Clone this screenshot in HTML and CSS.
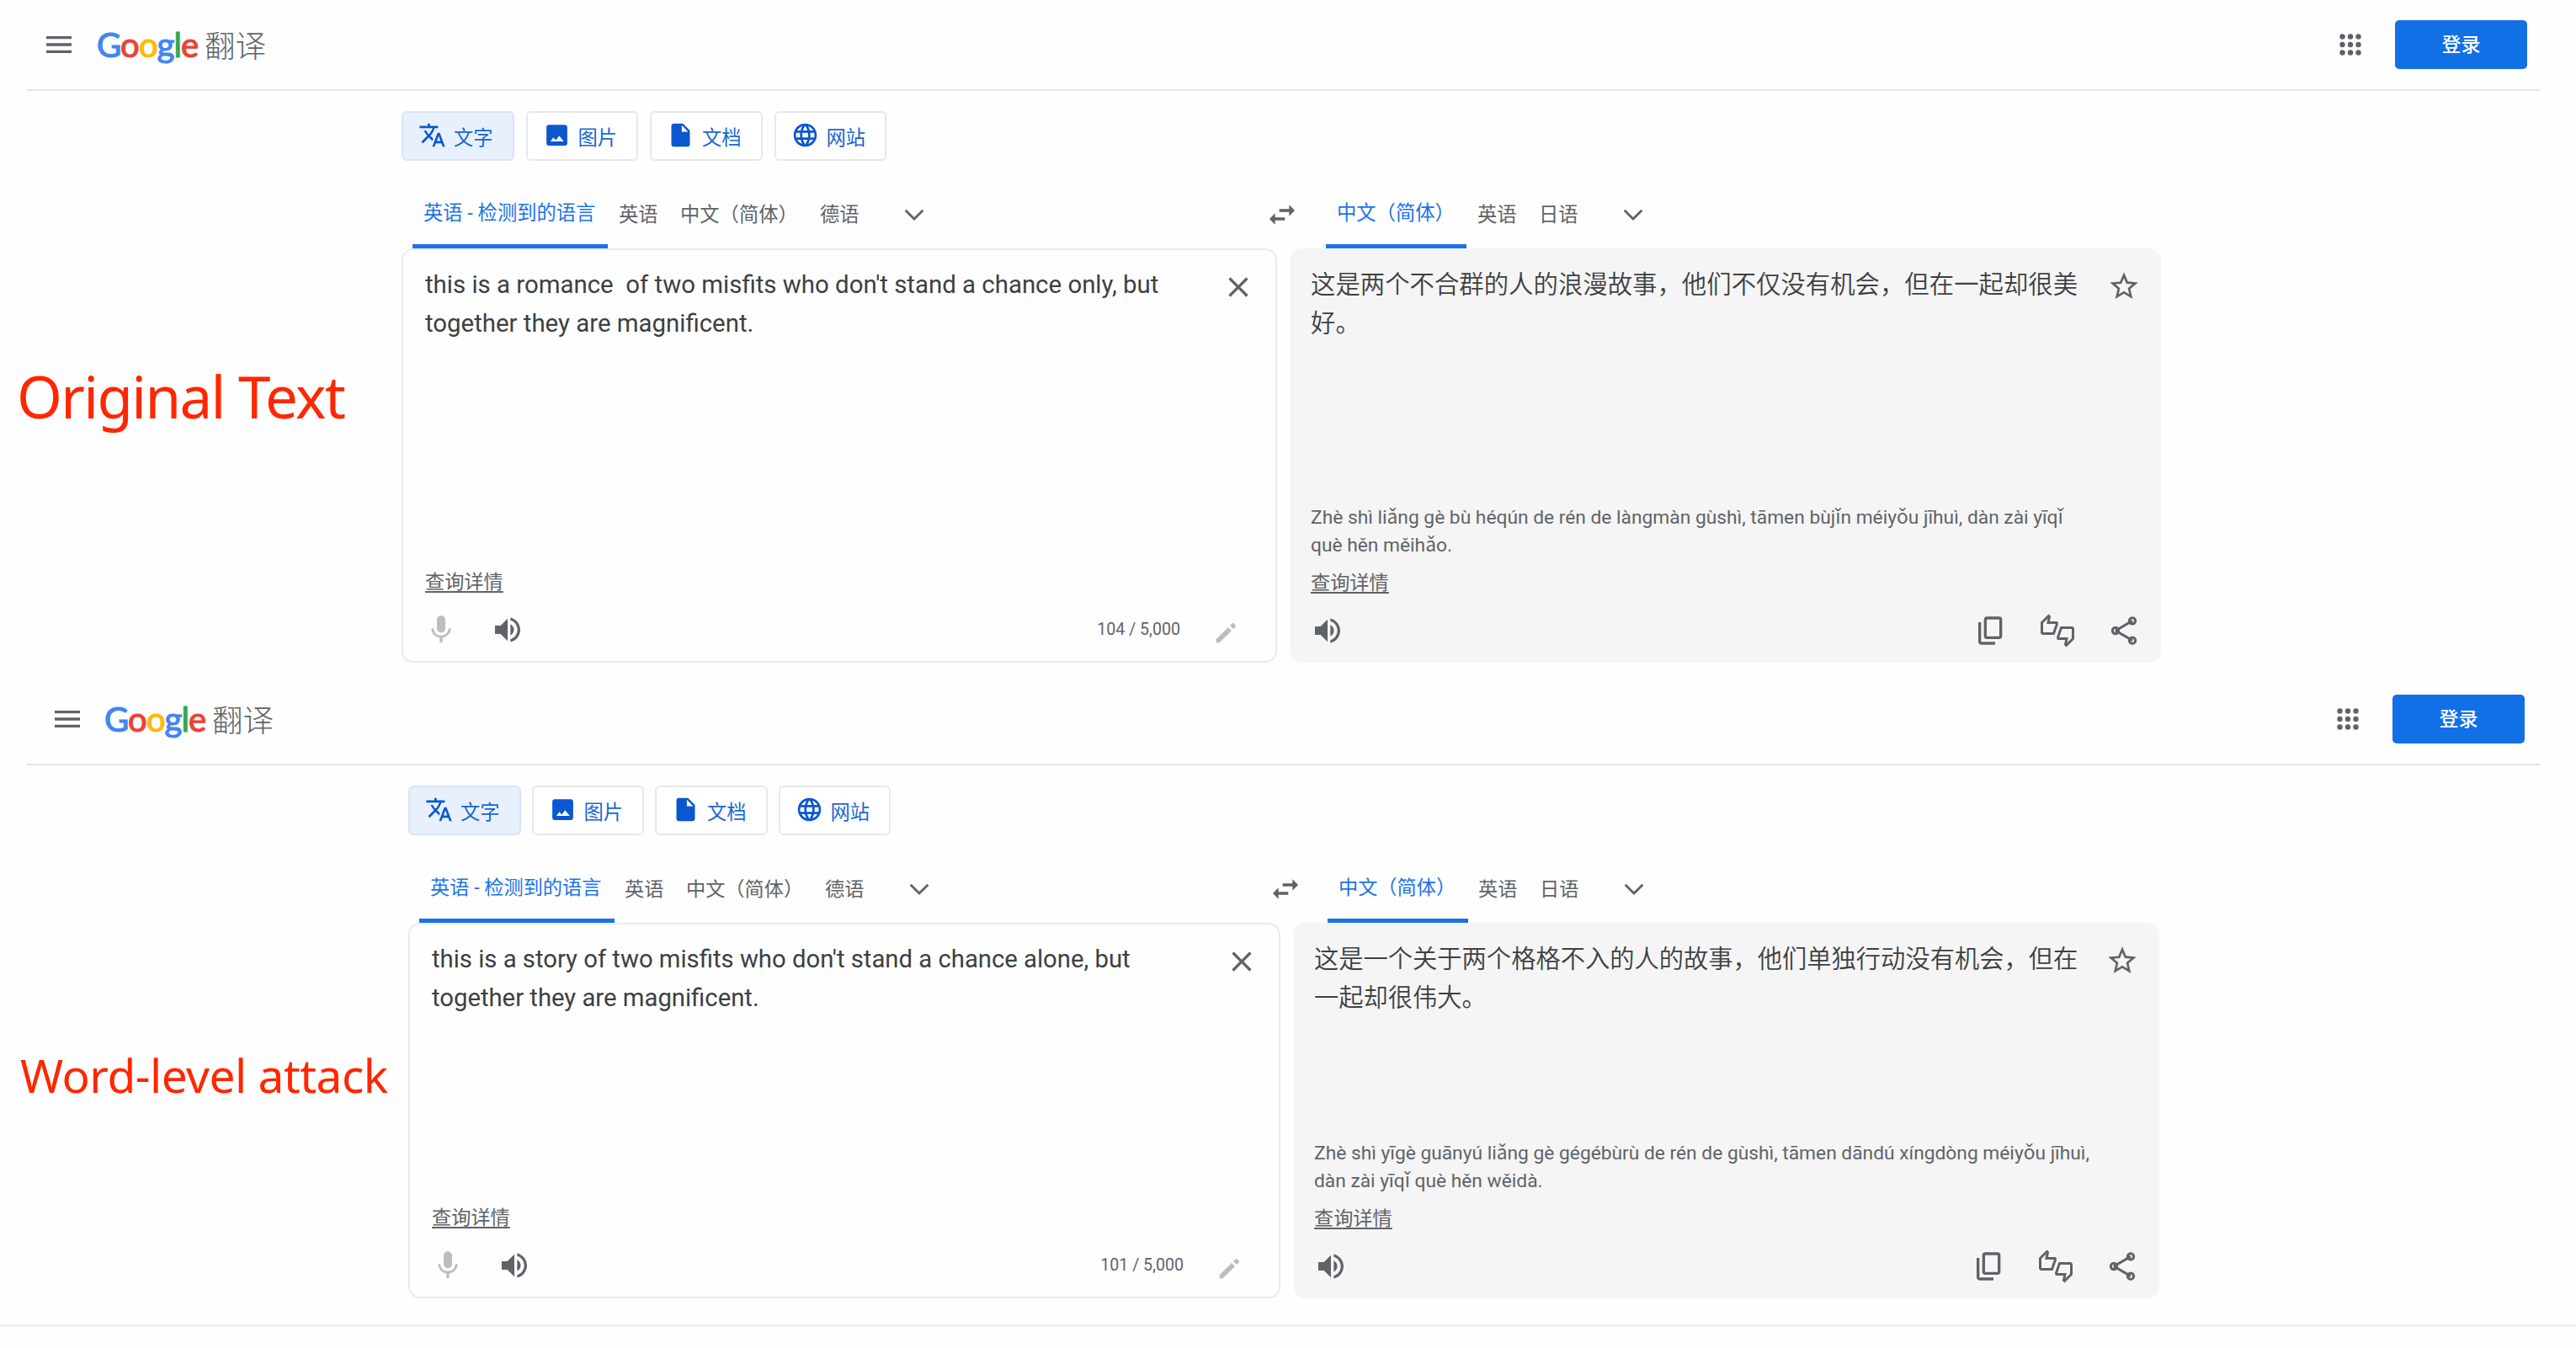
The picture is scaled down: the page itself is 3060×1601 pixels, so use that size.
FILE: index.html
```
<!DOCTYPE html>
<html lang="zh-CN">

<head>
  <meta charset="UTF-8">
  <meta name="viewport" content="width=device-width, initial-scale=1.0">
  <title>Google 翻译</title>
  <link rel="stylesheet" href="styles.css">
</head>

<body>
  <svg class="sprite" xmlns="http://www.w3.org/2000/svg">
    <symbol id="menu" viewBox="0 0 24 24"><path d="M3 18h18v-2H3v2zm0-5h18v-2H3v2zm0-7v2h18V6H3z"/></symbol>
    <symbol id="apps" viewBox="0 0 26 26"><circle cx="3.5" cy="3.5" r="3.2"/><circle cx="13" cy="3.5" r="3.2"/><circle cx="22.5" cy="3.5" r="3.2"/><circle cx="3.5" cy="13" r="3.2"/><circle cx="13" cy="13" r="3.2"/><circle cx="22.5" cy="13" r="3.2"/><circle cx="3.5" cy="22.5" r="3.2"/><circle cx="13" cy="22.5" r="3.2"/><circle cx="22.5" cy="22.5" r="3.2"/></symbol>
    <symbol id="translate" viewBox="0 0 24 24"><path d="M12.87 15.07l-2.54-2.51.03-.03c1.74-1.94 2.98-4.17 3.71-6.53H17V4h-7V2H8v2H1v1.99h11.17C11.5 7.92 10.44 9.75 9 11.35 8.07 10.32 7.3 9.19 6.69 8h-2c.73 1.63 1.73 3.17 2.98 4.56l-5.09 5.02L4 19l5-5 3.11 3.11.76-2.04zM18.5 10h-2L12 22h2l1.12-3h4.75L21 22h2l-4.5-12zm-2.62 7l1.62-4.33L19.12 17h-3.24z"/></symbol>
    <symbol id="image" viewBox="0 0 24 24"><path d="M21 19V5c0-1.100-.9-2-2-2H5c-1.100 0-2 .9-2 2v14c0 1.100.9 2 2 2h14c1.100 0 2-.9 2-2zM6.500 17.500l2.500-3.500 2.100 2.400 2.900-3.900 4 5z"/></symbol>
    <symbol id="doc" viewBox="0 0 24 24"><path d="M6 2c-1.100 0-2 .9-2 2v16c0 1.100.9 2 2 2h12c1.100 0 2-.9 2-2V8l-6-6H6zm7 7V3.500L18.500 9H13z"/></symbol>
    <symbol id="globe" viewBox="0 0 24 24"><path d="M11.990 2C6.470 2 2 6.480 2 12s4.470 10 9.990 10C17.520 22 22 17.520 22 12S17.520 2 11.990 2zm6.930 6h-2.950c-.32-1.250-.78-2.450-1.380-3.560 1.840.63 3.370 1.910 4.330 3.560zM12 4.040c.83 1.200 1.480 2.530 1.910 3.960h-3.820c.43-1.430 1.080-2.760 1.910-3.960zM4.260 14C4.100 13.360 4 12.690 4 12s.1-1.360.26-2h3.380c-.08.66-.14 1.320-.14 2s.06 1.340.14 2H4.260zm.82 2h2.950c.32 1.250.78 2.450 1.380 3.560-1.840-.63-3.370-1.900-4.330-3.560zm2.950-8H5.080c.96-1.660 2.490-2.930 4.330-3.560C8.810 5.550 8.350 6.750 8.030 8zM12 19.960c-.83-1.200-1.480-2.530-1.910-3.960h3.820c-.43 1.430-1.080 2.760-1.910 3.960zM14.340 14H9.660c-.09-.66-.16-1.320-.16-2s.07-1.350.16-2h4.680c.09.65.16 1.320.16 2s-.07 1.340-.16 2zm.25 5.560c.6-1.110 1.060-2.310 1.380-3.560h2.950c-.96 1.650-2.490 2.930-4.330 3.560zM16.360 14c.08-.66.14-1.320.14-2s-.06-1.340-.14-2h3.380c.16.64.26 1.310.26 2s-.1 1.360-.26 2h-3.380z"/></symbol>
    <symbol id="chevron" viewBox="0 0 24 24"><path d="M5.410 7.590L4 9l8 8 8-8-1.410-1.410L12 14.170z"/></symbol>
    <symbol id="swap" viewBox="0 0 24 24"><path d="M6.990 11L3 15l3.990 4v-3H14v-2H6.990v-3zM21 9l-3.990-4v3H10v2h7.010v3L21 9z"/></symbol>
    <symbol id="close" viewBox="0 0 24 24"><path d="M19 6.410L17.590 5 12 10.590 6.410 5 5 6.410 10.590 12 5 17.590 6.410 19 12 13.410 17.590 19 19 17.590 13.410 12z"/></symbol>
    <symbol id="star" viewBox="0 0 24 24"><path d="M22 9.240l-7.190-.62L12 2 9.190 8.630 2 9.240l5.460 4.730L5.820 21 12 17.270 18.180 21l-1.630-7.030L22 9.240zM12 15.400l-3.760 2.270 1-4.280-3.320-2.880 4.380-.38L12 6.100l1.710 4.040 4.380.38-3.320 2.880 1 4.280L12 15.400z"/></symbol>
    <symbol id="mic" viewBox="0 0 24 24"><path d="M12 14c1.660 0 3-1.340 3-3V5c0-1.660-1.340-3-3-3S9 3.340 9 5v6c0 1.660 1.340 3 3 3zm5.300-3c0 3-2.540 5.100-5.300 5.100S6.700 14 6.700 11H5c0 3.410 2.720 6.230 6 6.720V21h2v-3.280c3.280-.48 6-3.300 6-6.720h-1.700z"/></symbol>
    <symbol id="speaker" viewBox="0 0 24 24"><path d="M3 9v6h4l5 5V4L7 9H3zm13.500 3c0-1.770-1.020-3.290-2.500-4.030v8.050c1.480-.73 2.500-2.250 2.500-4.020zM14 3.230v2.060c2.890.86 5 3.540 5 6.710s-2.110 5.850-5 6.710v2.060c4.010-.91 7-4.490 7-8.770s-2.990-7.860-7-8.770z"/></symbol>
    <symbol id="pencil" viewBox="0 0 24 24"><path d="M3.500 17.500v3h3L17.300 9.700l-3-3L3.500 17.500zM20.700 6.300c.4-.4.4-1 0-1.400l-1.600-1.600c-.4-.4-1-.4-1.400 0l-1.900 1.900 3 3 1.900-1.900z"/></symbol>
    <symbol id="copy" viewBox="0 0 24 24"><path d="M18 2H9c-1.100 0-2 .9-2 2v12c0 1.100.9 2 2 2h9c1.100 0 2-.9 2-2V4c0-1.100-.9-2-2-2zm0 14H9V4h9v12zM3 15V6h2v14h10v2H5c-1.100 0-2-.9-2-2v-5z"/></symbol>
    <symbol id="thumbs" viewBox="0 0 42 40"><path d="M2.500 10.500L10.500 2.500l1 1-1.500 7h10l.5 1.500-4 11.500H3.500l-1-1zM39.500 29.500L31.500 37.500l-1-1 1.500-7H22l-.5-1.500 4-11.500h13l1 1z"/></symbol>
    <symbol id="share" viewBox="0 0 24 24"><path d="M6 12L18 5M6 12l12 7"/><circle cx="6" cy="12" r="2.200"/><circle cx="18" cy="5" r="2.200"/><circle cx="18" cy="19" r="2.200"/></symbol>
  </svg>

  <section class="page">
    <header class="header">
      <svg class="menu"><use href="#menu"/></svg>
      <div class="logo">
        <span class="google"><b class="blue">G</b><b class="red">o</b><b class="yellow">o</b><b class="blue">g</b><b class="green">l</b><b class="red">e</b></span>
        <span class="product">翻译</span>
      </div>
      <svg class="apps"><use href="#apps"/></svg>
      <button class="login">登录</button>
    </header>
    <div class="content">
      <h2 class="label">Original Text</h2>
      <main class="translator">
        <nav class="modes">
          <button class="mode active"><svg><use href="#translate"/></svg>文字</button>
          <button class="mode"><svg><use href="#image"/></svg>图片</button>
          <button class="mode"><svg><use href="#doc"/></svg>文档</button>
          <button class="mode"><svg><use href="#globe"/></svg>网站</button>
        </nav>
        <div class="languages">
          <div class="langs source-langs">
            <span class="lang selected">英语 - 检测到的语言</span>
            <span class="lang">英语</span>
            <span class="lang wide">中文（简体）</span>
            <span class="lang">德语</span>
            <svg class="chevron"><use href="#chevron"/></svg>
            <svg class="swap"><use href="#swap"/></svg>
          </div>
          <div class="langs target-langs">
            <span class="lang selected">中文（简体）</span>
            <span class="lang">英语</span>
            <span class="lang">日语</span>
            <svg class="chevron"><use href="#chevron"/></svg>
          </div>
        </div>
        <div class="panels">
          <div class="panel source">
            <div class="text-row">
              <p class="text">this is a romance&nbsp; of two misfits who don't stand a chance only, but<br>together they are magnificent.</p>
              <svg class="icon"><use href="#close"/></svg>
            </div>
            <a class="details">查询详情</a>
            <div class="tools">
              <svg class="icon muted"><use href="#mic"/></svg>
              <svg class="icon"><use href="#speaker"/></svg>
              <span class="count">104 / 5,000</span>
              <svg class="pencil"><use href="#pencil"/></svg>
            </div>
          </div>
          <div class="panel target">
            <div class="text-row">
              <p class="text">这是两个不合群的人的浪漫故事，他们不仅没有机会，但在一起却很美<br>好。</p>
              <svg class="icon star"><use href="#star"/></svg>
            </div>
            <p class="pinyin">Zhè shì liǎng gè bù héqún de rén de làngmàn gùshì, tāmen bùjǐn méiyǒu jīhuì, dàn zài yīqǐ<br>què hěn měihǎo.</p>
            <a class="details">查询详情</a>
            <div class="tools">
              <svg class="icon"><use href="#speaker"/></svg>
              <div class="actions">
                <svg class="icon"><use href="#copy"/></svg>
                <svg class="thumbs"><use href="#thumbs"/></svg>
                <svg class="icon share"><use href="#share"/></svg>
              </div>
            </div>
          </div>
        </div>
      </main>
    </div>
  </section>

  <section class="page attack">
    <header class="header">
      <svg class="menu"><use href="#menu"/></svg>
      <div class="logo">
        <span class="google"><b class="blue">G</b><b class="red">o</b><b class="yellow">o</b><b class="blue">g</b><b class="green">l</b><b class="red">e</b></span>
        <span class="product">翻译</span>
      </div>
      <svg class="apps"><use href="#apps"/></svg>
      <button class="login">登录</button>
    </header>
    <div class="content">
      <h2 class="label">Word-level attack</h2>
      <main class="translator">
        <nav class="modes">
          <button class="mode active"><svg><use href="#translate"/></svg>文字</button>
          <button class="mode"><svg><use href="#image"/></svg>图片</button>
          <button class="mode"><svg><use href="#doc"/></svg>文档</button>
          <button class="mode"><svg><use href="#globe"/></svg>网站</button>
        </nav>
        <div class="languages">
          <div class="langs source-langs">
            <span class="lang selected">英语 - 检测到的语言</span>
            <span class="lang">英语</span>
            <span class="lang wide">中文（简体）</span>
            <span class="lang">德语</span>
            <svg class="chevron"><use href="#chevron"/></svg>
            <svg class="swap"><use href="#swap"/></svg>
          </div>
          <div class="langs target-langs">
            <span class="lang selected">中文（简体）</span>
            <span class="lang">英语</span>
            <span class="lang">日语</span>
            <svg class="chevron"><use href="#chevron"/></svg>
          </div>
        </div>
        <div class="panels">
          <div class="panel source">
            <div class="text-row">
              <p class="text">this is a story of two misfits who don't stand a chance alone, but<br>together they are magnificent.</p>
              <svg class="icon"><use href="#close"/></svg>
            </div>
            <a class="details">查询详情</a>
            <div class="tools">
              <svg class="icon muted"><use href="#mic"/></svg>
              <svg class="icon"><use href="#speaker"/></svg>
              <span class="count">101 / 5,000</span>
              <svg class="pencil"><use href="#pencil"/></svg>
            </div>
          </div>
          <div class="panel target">
            <div class="text-row">
              <p class="text">这是一个关于两个格格不入的人的故事，他们单独行动没有机会，但在<br>一起却很伟大。</p>
              <svg class="icon star"><use href="#star"/></svg>
            </div>
            <p class="pinyin">Zhè shì yīgè guānyú liǎng gè gégébùrù de rén de gùshì, tāmen dāndú xíngdòng méiyǒu jīhuì,<br>dàn zài yīqǐ què hěn wěidà.</p>
            <a class="details">查询详情</a>
            <div class="tools">
              <svg class="icon"><use href="#speaker"/></svg>
              <div class="actions">
                <svg class="icon"><use href="#copy"/></svg>
                <svg class="thumbs"><use href="#thumbs"/></svg>
                <svg class="icon share"><use href="#share"/></svg>
              </div>
            </div>
          </div>
        </div>
      </main>
    </div>
  </section>
</body>

</html>
```

FILE: styles.css
```
* {
  box-sizing: border-box;
}

body {
  margin: 0;
  background: #fefefe;
  color: #3c4043;
  font-family: Roboto, "Noto Sans CJK SC", sans-serif;
  overflow: hidden;
}

h2,
p {
  margin: 0;
}

button {
  font-family: inherit;
}

svg {
  flex: none;
  fill: #5f6368;
}

.sprite {
  display: none;
}

.page {
  --side: 477px;
  --source: 1040px;
  --target: 1034px;
  --gap: 16px;
  --panel-height: 492px;
  height: 801px;
}

.header {
  display: flex;
  align-items: center;
  height: 108px;
  margin: 0 42px 0 32px;
  padding: 0 16px 0 18px;
  border-bottom: 2px solid #e3e4e6;
}

.menu {
  width: 40px;
  height: 40px;
}

.logo {
  display: flex;
  align-items: baseline;
  gap: 7px;
  height: 60px;
  margin-left: 25px;
  line-height: 60px;
}

.google {
  width: 121px;
  font-family: Lato, sans-serif;
  font-size: 40px;
  letter-spacing: -0.9px;
}

.google b {
  font-weight: 400;
  -webkit-text-stroke: 1.2px currentColor;
}

.blue {
  color: #4285f4;
}

.red {
  color: #ea4335;
}

.yellow {
  color: #fbbc04;
}

.green {
  color: #34a853;
}

.product {
  color: #5f6368;
  font-size: 36.500px;
  font-weight: 300;
}

.apps {
  width: 26px;
  height: 26px;
  margin-left: auto;
}

.login {
  width: 157px;
  height: 58px;
  margin-left: 40px;
  padding: 0 0 5px;
  border: none;
  border-radius: 5px;
  background: #1270e6;
  color: white;
  font-size: 23px;
  font-weight: 500;
}

.content {
  display: flex;
}

.label {
  flex: none;
  width: var(--side);
  padding: 314px 0 0 20px;
  color: #ff2600;
  font-family: "Noto Sans", sans-serif;
  font-size: 69px;
  font-weight: 400;
  line-height: 96px;
  letter-spacing: -1.600px;
  white-space: nowrap;
}

.modes {
  display: flex;
  gap: 14px;
  padding-top: 24px;
}

.mode {
  display: flex;
  align-items: center;
  gap: 9px;
  width: 133.500px;
  height: 59px;
  padding: 0 0 0 18px;
  border: 2px solid #e6e8eb;
  border-radius: 6px;
  background: white;
  color: #1967d2;
  font-size: 23.300px;
}

.mode svg {
  width: 33px;
  height: 33px;
  margin-top: -2px;
  fill: #0b57d0;
}

.mode.active {
  border-color: #d8e4f6;
  background: #e8f0fe;
}

.languages {
  display: flex;
  height: 81px;
  margin-top: 24px;
}

.langs {
  display: flex;
  align-items: center;
  height: 80px;
  color: #5f6368;
  font-size: 23.300px;
  line-height: 77px;
  white-space: nowrap;
}

.source-langs {
  width: calc(var(--source) + var(--gap));
  padding-left: 13px;
}

.target-langs {
  padding-left: 42px;
}

.lang {
  width: 73px;
}

.lang.wide {
  width: 166px;
}

.lang.selected {
  width: 232px;
  height: 80px;
  margin-right: 13px;
  padding-left: 13px;
  border-bottom: 5px solid #1a73e8;
  color: #1a73e8;
}

.target-langs .lang.selected {
  width: 167px;
}

.chevron {
  width: 34px;
  height: 34px;
  margin-left: 22px;
}

.swap {
  width: 40px;
  height: 40px;
  margin: 0 -10px 0 auto;
}

.panels {
  display: flex;
  gap: var(--gap);
  margin-top: -1px;
}

.panel {
  display: flex;
  flex-direction: column;
  height: var(--panel-height);
  border: 2px solid #e9ebeb;
  border-radius: 14px;
}

.source {
  width: var(--source);
  padding: 19px 24px 1px 26px;
}

.target {
  width: var(--target);
  padding: 19px 22px 0 22px;
  border-color: #f5f5f5;
  background: #f5f5f5;
}

.text-row {
  display: flex;
  justify-content: space-between;
  margin-bottom: auto;
}

.text {
  font-size: 29.400px;
  line-height: 45.500px;
  white-space: nowrap;
}

.target .text {
  font-weight: 350;
}

.icon {
  width: 40px;
  height: 40px;
}

.text-row .icon {
  margin-top: 5px;
}

.text-row .star {
  margin-top: 4px;
}

.muted,
.pencil {
  fill: #bdbdbd;
}

.pinyin {
  margin-bottom: 12px;
  color: #5f6368;
  font-size: 22.780px;
  line-height: 32.300px;
  white-space: nowrap;
}

.details {
  align-self: flex-start;
  margin-bottom: 4px;
  color: #5f6368;
  font-size: 23.200px;
  line-height: 32px;
  text-decoration: underline;
  text-underline-offset: 3px;
}

.tools {
  display: flex;
  align-items: center;
  height: 73px;
}

.source .tools {
  gap: 39px;
}

.source .tools .muted {
  margin-left: -1px;
}

.count {
  margin-left: auto;
  color: #5f6368;
  font-size: 19.600px;
}

.pencil {
  width: 32px;
  height: 32px;
  margin: 9px 19px 0 -1px;
}

.actions {
  display: flex;
  align-items: center;
  gap: 38px;
  margin-left: auto;
}

.thumbs {
  width: 42px;
  height: 40px;
  fill: none;
  stroke: #5f6368;
  stroke-width: 3;
}

.share {
  fill: none;
  stroke: #5f6368;
  stroke-width: 1.800;
}

/* second page */
.attack {
  --side: 485px;
  --source: 1036px;
  --target: 1028px;
  --gap: 16px;
  --panel-height: 446px;
  height: 775px;
  border-bottom: 3px solid #f0f0f0;
}

.attack .header {
  padding: 0 19px 0 28px;
}

.attack .logo {
  margin-left: 24px;
}

.attack .label {
  padding: 320px 0 0 24px;
  font-size: 55px;
  letter-spacing: -0.500px;
}

.attack .modes {
  gap: 13px;
}

.attack .langs {
  font-size: 23.200px;
}

.attack .target-langs {
  padding-left: 40px;
}

.attack .lang.wide {
  width: 165px;
}

.attack .lang.selected {
  margin-right: 12px;
}

.attack .text {
  font-size: 29.270px;
}
```
